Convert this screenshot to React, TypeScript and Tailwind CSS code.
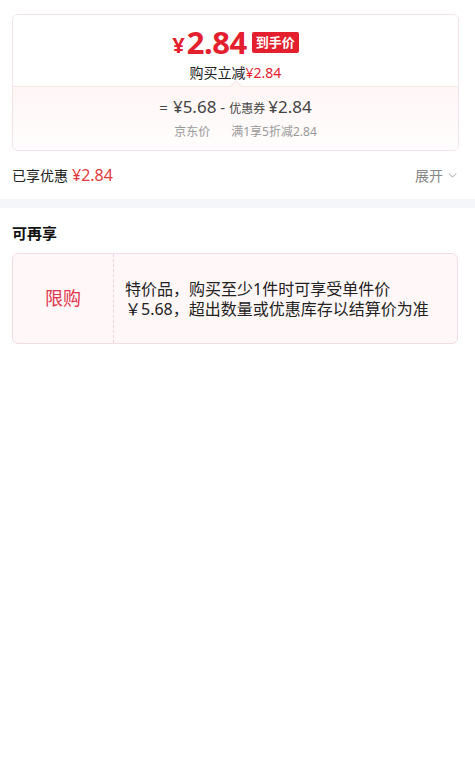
import { ChevronDown } from "lucide-react";

export default function App() {
  return (
    <div
      className="min-h-[762px] bg-white text-[#222]"
      style={{ fontFamily: '"Noto Sans", "Noto Sans CJK SC", sans-serif' }}
    >
      <div className="pl-[12px] pr-[16px] pt-[14px]">
        {/* 到手价卡片 */}
        <div className="rounded-[6px] border border-[#f3e3e6] overflow-hidden">
          <div className="flex flex-col items-center pt-[11px] pb-[4px] bg-white">
            <div className="flex items-center h-[32px]">
              <span className="text-[#e4202e] font-bold text-[22px] leading-none mr-[2px] mt-[4px]">¥</span>
              <span className="text-[#e4202e] font-bold text-[31px] leading-none tracking-[-0.5px]">2.84</span>
              <span className="ml-[5px] bg-[#e4202e] text-white text-[13px] font-bold leading-[21px] px-[4px] rounded-[2px]">
                到手价
              </span>
            </div>
            <div className="mt-[5px] text-[14px] leading-[19px] text-[#222]">
              购买立减<span className="text-[#e4202e]">¥2.84</span>
            </div>
          </div>
          <div className="relative border-t border-[#f7e8ea] bg-gradient-to-b from-[#fff6f6] to-[#fffdfd] flex flex-col items-center pt-[8px] pb-[9px]">
            <span className="absolute -top-[5px] left-1/2 -translate-x-1/2 w-[8px] h-[8px] rotate-45 bg-[#fff6f6] border-l border-t border-[#f7e8ea]" />
            <div className="flex items-baseline text-[#444] leading-[24px]">
              <span className="text-[15px] mr-[5px]">=</span>
              <span className="text-[17px]">¥5.68</span>
              <span className="text-[15px] mx-[4px]">-</span>
              <span className="text-[12px] mr-[3px]">优惠券</span>
              <span className="text-[17px]">¥2.84</span>
            </div>
            <div className="flex text-[12px] leading-[18px] text-[#999] mt-[2px] ml-[20px]">
              <span className="mr-[21px]">京东价</span>
              <span>满1享5折减2.84</span>
            </div>
          </div>
        </div>

        {/* 已享优惠 */}
        <div className="flex items-center justify-between h-[48px]">
          <div className="flex items-baseline">
            <span className="text-[14px] text-[#222]">已享优惠</span>
            <span className="ml-[4px] text-[16px] text-[#e4393c]">¥2.84</span>
          </div>
          <div className="flex items-center text-[14px] text-[#888]">
            展开
            <ChevronDown size={13} strokeWidth={1.5} className="ml-[3px]" />
          </div>
        </div>
      </div>

      <div className="h-[9px] bg-[#f5f6fa]" />

      <div className="pl-[12px] pr-[17px]">
        <div className="text-[15px] font-bold leading-[20px] pt-[15px] pb-[10px] text-[#111]">可再享</div>
        <div className="flex h-[91px] rounded-[6px] border border-[#f3dde2] bg-[#fff7f8]">
          <div className="w-[101px] flex items-center justify-center border-r border-dashed border-[#efd3d9]">
            <span className="text-[18px] text-[#e0354b]">限购</span>
          </div>
          <div className="flex-1 flex flex-col justify-center pl-[11px] text-[16px] leading-[20px] text-[#222]">
            <div>特价品，购买至少1件时可享受单件价</div>
            <div>￥5.68，超出数量或优惠库存以结算价为准</div>
          </div>
        </div>
      </div>
    </div>
  );
}
